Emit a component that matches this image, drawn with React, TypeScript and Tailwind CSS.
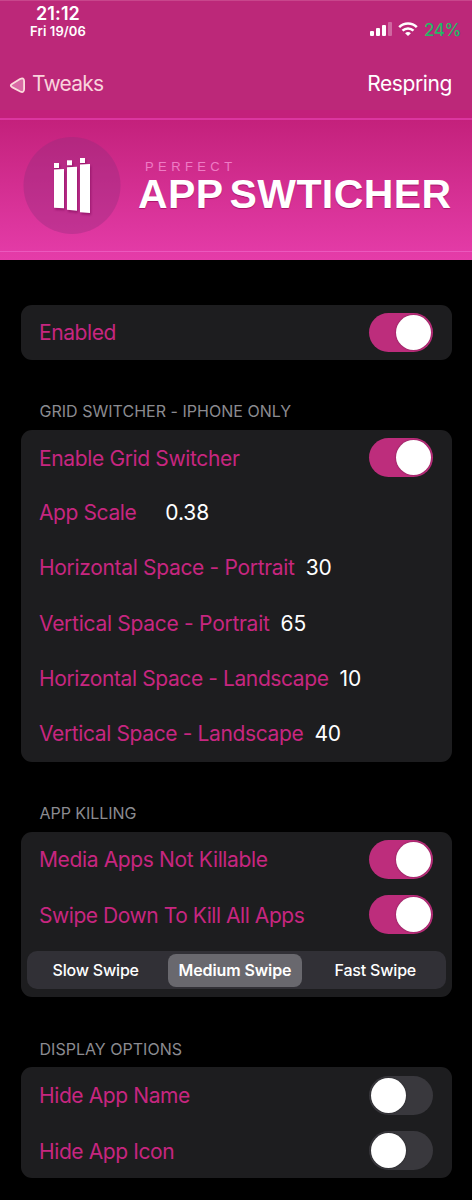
import { useState } from 'react';
import type { ReactNode } from 'react';
import clsx from 'clsx';

function Toggle({ initial }: { initial: boolean }) {
  const [on, setOn] = useState(initial);
  return (
    <button
      type="button"
      role="switch"
      aria-checked={on}
      onClick={() => setOn(!on)}
      className={clsx(
        'flex h-[39px] w-16 shrink-0 items-center rounded-full px-0.5',
        on ? 'justify-end bg-[#bd2d7c]' : 'justify-start bg-[#39383d]',
      )}
    >
      <span className="size-[35px] rounded-full bg-white shadow-[0_0_2px_rgba(0,0,0,0.4)]" />
    </button>
  );
}

function Card({ children }: { children: ReactNode }) {
  return <section className="mr-[20.5px] ml-[20.5px] rounded-[11px] bg-[#1d1d1f]">{children}</section>;
}

function Heading({ children, className }: { children: ReactNode; className: string }) {
  return <h2 className={clsx('mt-[41.5px] mb-[8.5px] pl-[39.5px] text-[16px] leading-5 text-[#8b8b90]', className)}>{children}</h2>;
}

function Row({ label, tracking, children }: { label: string; tracking: string; children?: ReactNode }) {
  return (
    <div className="flex h-[55.3px] items-center px-[18.5px]">
      <span className={clsx('whitespace-nowrap text-[21px] text-[#c72680]', tracking)}>{label}</span>
      {children}
    </div>
  );
}

function ToggleRow({ label, tracking, on }: { label: string; tracking: string; on: boolean }) {
  return (
    <Row label={label} tracking={clsx('mt-0.5', tracking)}>
      <span className="grow" />
      <Toggle initial={on} />
    </Row>
  );
}

function Value({ children, className }: { children: string; className: string }) {
  return <span className={clsx('text-[21px] tracking-[-0.1px] text-white', className)}>{children}</span>;
}

function Signal() {
  return (
    <svg width="23" height="15" viewBox="0 0 23 15" fill="#fff">
      <rect x="0" y="9" width="4" height="5" rx="1" />
      <rect x="6" y="6" width="4" height="8" rx="1" />
      <rect x="12" y="3" width="4" height="11" rx="1" />
      <rect x="18" y="0" width="4" height="14" rx="1" opacity="0.3" />
    </svg>
  );
}

function Wifi() {
  return (
    <svg width="20" height="15" viewBox="0 0 20 15" fill="none" stroke="#fff" strokeWidth="2.6">
      <path d="M1.2 5.1C6.2 .3 13.8 .3 18.8 5.1" />
      <path d="M4.5 8.6C7.6 5.7 12.4 5.7 15.5 8.6" />
      <path d="M7.1 11.2C8.8 9.7 11.2 9.7 12.9 11.2L10 14Z" fill="#fff" stroke="none" />
    </svg>
  );
}

function BackArrow() {
  return (
    <svg width="17" height="18" viewBox="0 0 17 18">
      <path
        d="M3 7.9L11 3Q15 1.2 15.1 5V13.2Q15 17.3 11.2 15.5L3 11.1Q.6 9.5 3 7.9Z"
        fill="#d96ba5"
        stroke="#fbdcdc"
        strokeWidth="1.8"
        strokeLinejoin="round"
      />
    </svg>
  );
}

function Logo() {
  return (
    <svg width="98" height="98" viewBox="0 0 98 98">
      <circle cx="49" cy="48.5" r="48.5" fill="#8f2d7d" fillOpacity="0.36" />
      <g fill="#fff" className="drop-shadow-[1px_2px_1px_rgba(120,0,80,0.5)]">
        <rect x="31" y="26" width="5" height="5" />
        <rect x="44" y="23.3" width="5" height="5" />
        <rect x="57" y="21" width="5" height="5" />
        <path d="M31 32.5L41 32V71.2L31 70.8Z" />
        <path d="M44 30.3L54 29.7V73.7L44 72.8Z" />
        <path d="M57 27.5L67 27V76L57 75.2Z" />
      </g>
    </svg>
  );
}

const speeds = [
  { name: 'Slow Swipe', inset: 'pr-0.5' },
  { name: 'Medium Swipe', inset: '' },
  { name: 'Fast Swipe', inset: 'pl-[4px]' },
];

export default function App() {
  const [speed, setSpeed] = useState('Medium Swipe');
  return (
    <main className="h-[1200px] w-[472px] overflow-hidden bg-black font-['Inter',sans-serif]">
      <header className="h-[110px] border-t border-[#c8468c] bg-[#bc2879] text-white">
        <div className="flex h-[38px] justify-between pr-[11px] pl-[29px]">
          <div className="flex w-[58px] flex-col items-center whitespace-nowrap">
            <span className="mt-[3px] text-[18px] leading-5 font-semibold tracking-[0.1px]">21:12</span>
            <span className="text-[13px] leading-[14px] font-semibold tracking-[0.1px]">Fri 19/06</span>
          </div>
          <div className="flex items-start pt-[21px]">
            <Signal />
            <span className="ml-[5px]"><Wifi /></span>
            <span className="mt-[-2px] ml-[6px] text-[17px] leading-5 font-medium tracking-[-0.4px] text-[#25b866]">24%</span>
          </div>
        </div>
        <nav className="flex h-[90px] items-center justify-between pr-5 pl-[9px]">
          <div className="flex items-center">
            <span className="mt-px"><BackArrow /></span>
            <span className="ml-1.5 text-[21px] tracking-[-0.75px] text-[#f9d3dc]">Tweaks</span>
          </div>
          <span className="text-[21px] tracking-[-0.4px]">Respring</span>
        </nav>
      </header>
      <div className="flex h-[150px] flex-col bg-linear-to-b from-[#c3207b] from-5% to-[#e53ca9]">
        <div className="mt-2 h-0.5 shrink-0 bg-[#dc35a0]" />
        <div className="flex h-[131px] shrink-0 pt-[17px] pl-[23px]">
          <Logo />
          <div className="ml-[17px] whitespace-nowrap font-['Liberation_Sans',sans-serif]">
            <div className="mt-[23px] ml-[7px] text-[13px] leading-[14px] tracking-[4.4px] text-[#ee7cc5]">PERFECT</div>
            <div className="text-[41px] leading-[40px] font-bold tracking-[0.4px] text-white [word-spacing:-5px] [text-shadow:0_1px_1px_#a91469]">APP SWTICHER</div>
          </div>
        </div>
        <div className="h-px shrink-0 bg-[#eb58bd]" />
      </div>

      <div className="pt-[44.5px]">
        <Card>
          <ToggleRow label="Enabled" tracking="tracking-[-0.4px]" on />
        </Card>
      </div>

      <Heading className="tracking-[0.02px]">GRID SWITCHER - IPHONE ONLY</Heading>
      <Card>
        <ToggleRow label="Enable Grid Switcher" tracking="tracking-[-0.36px]" on />
        <Row label="App Scale" tracking="tracking-[-0.4px]"><Value className="ml-[29px]">0.38</Value></Row>
        <Row label="Horizontal Space - Portrait" tracking="tracking-[-0.32px]"><Value className="ml-[11px]">30</Value></Row>
        <Row label="Vertical Space - Portrait" tracking="tracking-[-0.28px]"><Value className="ml-[11px]">65</Value></Row>
        <Row label="Horizontal Space - Landscape" tracking="tracking-[-0.4px]"><Value className="ml-[11px]">10</Value></Row>
        <Row label="Vertical Space - Landscape" tracking="tracking-[-0.37px]"><Value className="ml-[11px]">40</Value></Row>
      </Card>

      <Heading className="tracking-[-0.05px]">APP KILLING</Heading>
      <Card>
        <ToggleRow label="Media Apps Not Killable" tracking="tracking-[-0.36px]" on />
        <ToggleRow label="Swipe Down To Kill All Apps" tracking="tracking-[-0.45px]" on />
        <div className="h-[55.3px] px-[6px] pt-[9px]">
          <div className="grid h-[38px] grid-cols-3 rounded-[10px] bg-[#313036] px-0.5 py-[2.5px]">
            {speeds.map(({ name, inset }) => (
              <button
                key={name}
                type="button"
                onClick={() => setSpeed(name)}
                className={clsx(
                  'mr-[3.5px] ml-[1.5px] whitespace-nowrap rounded-[8px] text-[16px] text-white',
                  inset,
                  name === speed ? 'bg-[#69686e] font-semibold tracking-[-0.1px]' : 'font-medium tracking-[-0.2px]',
                )}
              >
                {name}
              </button>
            ))}
          </div>
        </div>
      </Card>

      <Heading className="tracking-[0.02px]">DISPLAY OPTIONS</Heading>
      <Card>
        <ToggleRow label="Hide App Name" tracking="tracking-[-0.4px]" on={false} />
        <ToggleRow label="Hide App Icon" tracking="tracking-[-0.4px]" on={false} />
      </Card>
    </main>
  );
}
